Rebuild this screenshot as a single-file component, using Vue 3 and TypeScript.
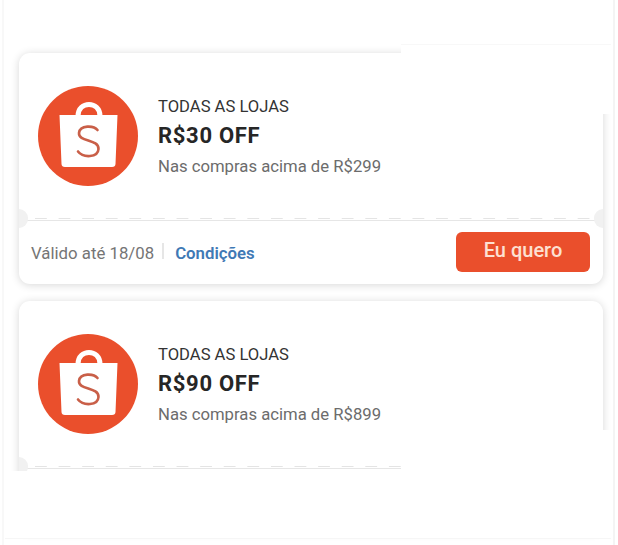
<script setup lang="ts">
interface ICoupon {
  id: number,
  scope: string,
  title: string,
  minimum: string,
  expires: string
}

const coupons: ICoupon[] = [
  { id: 1, scope: 'TODAS AS LOJAS', title: 'R$30 OFF', minimum: 'Nas compras acima de R$299', expires: 'Válido até 18/08' },
  { id: 2, scope: 'TODAS AS LOJAS', title: 'R$90 OFF', minimum: 'Nas compras acima de R$899', expires: 'Válido até 31/08' }
]
</script>

<template>
  <div class="page">
    <div class="coupon-list">
      <div v-for="coupon in coupons" :key="coupon.id" class="coupon">
        <div class="coupon-body">
          <svg class="logo" viewBox="0 0 100 100" width="100" height="100">
            <circle cx="50" cy="50" r="50" fill="#ea4f2c" />
            <path d="M40 30 C40 14.500 62 14.500 62 30" fill="none" stroke="#fff" stroke-width="5" />
            <path d="M21.5 29 H79.5 L77.5 78 Q77.400 81 74 81 H27 Q23.600 81 23.500 78 Z" fill="#fff" />
            <path d="M59.500 44 C56 39.500 42 38.500 41 47 C40.200 56 61 53 60.500 63 C60 72 45 72 40 65.500" fill="none" stroke="#c95f48" stroke-width="2.600" stroke-linecap="round" />
          </svg>
          <div class="info">
            <div class="scope">{{ coupon.scope }}</div>
            <div class="title">{{ coupon.title }}</div>
            <div class="minimum">{{ coupon.minimum }}</div>
          </div>
        </div>
        <div class="divider">
          <span class="notch notch-left"></span>
          <span class="notch notch-right"></span>
        </div>
        <div class="coupon-footer">
          <div class="terms">
            <span class="expires">{{ coupon.expires }}</span>
            <span class="sep"></span>
            <span class="link">Condições</span>
          </div>
          <button class="btn">Eu quero</button>
        </div>
      </div>
    </div>
    <div class="patch patch-top"></div>
    <div class="patch patch-right"></div>
    <div class="patch patch-bottom"></div>
  </div>
</template>

<style scoped>
.page {
  position: relative;
  width: 618px;
  height: 545px;
  box-sizing: border-box;
  padding: 53px 15px 0 19px;
  overflow: hidden;
  background: #fff;
  font-family: Roboto, "Liberation Sans", sans-serif;
}
.page::before {
  content: "";
  position: absolute;
  top: 0;
  bottom: 0;
  left: 2px;
  width: 613px;
  border-left: 2px solid #f8f8f8;
  border-right: 2px solid #f4f4f4;
  box-sizing: border-box;
}
.coupon-list {
  position: relative;
  display: flex;
  flex-direction: column;
  gap: 17px;
}
.coupon {
  background: #fff;
  border-radius: 11px;
  box-shadow: 0 1px 8px rgba(0, 0, 0, 0.16);
}
.coupon-body {
  display: flex;
  align-items: center;
  gap: 20px;
  height: 165px;
  box-sizing: border-box;
  padding: 0 0 0 19px;
}
.logo {
  flex: none;
}
.info {
  display: flex;
  flex-direction: column;
  margin-top: 3px;
}
.scope {
  font-size: 16.6px;
  line-height: 22px;
  color: #333;
}
.title {
  font-size: 22px;
  font-weight: 700;
  line-height: 36px;
  letter-spacing: 0.7px;
  color: #262626;
}
.minimum {
  font-size: 16.7px;
  line-height: 25px;
  color: #6c6c6c;
}
.divider {
  position: relative;
  height: 2px;
  background-image: linear-gradient(to right, #e4e4e4 0, #e4e4e4 12px, transparent 12px);
  background-size: 23.600px 1px;
  background-position: 16px 0;
  background-repeat: repeat-x;
}
.notch {
  position: absolute;
  top: -9px;
  width: 9px;
  height: 19px;
  background: #f1f1f1;
}
.notch-left {
  left: 0;
  border-radius: 0 10px 10px 0;
}
.notch-right {
  right: 0;
  border-radius: 10px 0 0 10px;
}
.coupon-footer {
  display: flex;
  justify-content: space-between;
  align-items: center;
  height: 63px;
  box-sizing: content-box;
  padding: 0 13px 0 12px;
  border-top: 1px solid #e6e6e6;
}
.terms {
  display: flex;
  align-items: center;
  font-size: 16.8px;
}
.expires {
  color: #757575;
}
.sep {
  width: 2px;
  height: 16px;
  margin: -3px 11px 0 8px;
  background: #e6e6e6;
}
.link {
  font-weight: 600;
  color: #3f79b5;
}
.btn {
  width: 134px;
  height: 40px;
  margin-bottom: 2px;
  border: 0;
  border-radius: 6px;
  background: #ea4f2c;
  color: #fde0d2;
  font-family: inherit;
  font-size: 20px;
  font-weight: 500;
  padding: 0 0 3px;
}
.patch {
  position: absolute;
  background: #fff;
}
.patch-top {
  top: 44px;
  left: 401px;
  width: 210px;
  height: 70px;
  border-top: 1px solid #f8f8f8;
  box-sizing: border-box;
}
.patch-right {
  top: 430px;
  left: 401px;
  width: 210px;
  height: 45px;
}
.patch-bottom {
  top: 471px;
  left: 5px;
  width: 606px;
  height: 67px;
  border-bottom: 1px solid #f6f6f6;
}
</style>
